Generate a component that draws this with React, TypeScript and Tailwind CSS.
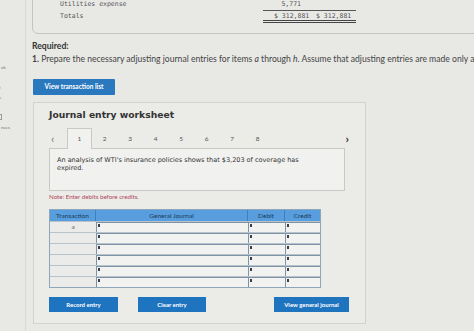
import React from "react";

const tabs = ["2", "3", "4", "5", "6", "7", "8"];
const rows = ["a", "", "", "", "", ""];

function InputCell({ w }: { w: string }) {
  return (
    <div className={`${w} h-full border-l border-t-[1.5px] border-[#7f93a6] bg-[#f2f3f1] flex items-start`}>
      <span className="block w-[1.5px] h-[2.5px] bg-[#34414d] mt-px ml-px" />
    </div>
  );
}

export default function App() {
  return (
    <div className="w-[474px] h-[331px] overflow-hidden bg-[#e8e8e5] flex font-['Lato','Liberation_Sans',sans-serif] text-[#3a3a3a]">
      {/* sidebar fragment */}
      <aside className="w-[26px] shrink-0 border-r border-[#d8d8d4] flex flex-col text-[4.5px] leading-[5px] text-[#777]">
        <div className="mt-[65px] ml-px">ok</div>
        <div className="mt-[15px] ml-[-1px]">t</div>
        <div className="mt-[5px] ml-[-1px]">e</div>
        <div className="mt-[14px] w-[3px] h-[6px] border border-[#999] ml-[-1px]" />
        <div className="mt-[5px] ml-px">nces</div>
      </aside>

      <main className="flex-1 min-w-0 pl-[6px]">
        {/* top trial-balance box */}
        <div className="mt-[-8px] w-[600px] border border-[#c4c4c0] rounded-bl-[6px] pl-[27px] pb-[10px] font-['DejaVu_Sans_Mono',monospace] text-[6.5px] text-[#555] whitespace-nowrap">
          <div className="h-[18px] flex items-end">
            <div className="w-[203px] pb-[3px] leading-[8px]">Utilities expense</div>
            <div className="w-[93px] h-full border-b border-[#555] flex items-end">
              <div className="w-[47px] text-right pr-[9px] leading-[8px] pb-[2px]">5,771</div>
            </div>
          </div>
          <div className="h-[12px] flex items-start">
            <div className="w-[203px] leading-[8px] pt-px">Totals</div>
            <div className="w-[93px] h-full border-b-[3px] border-double border-[#444] flex leading-[8px] pt-px">
              <div className="w-[49px] pl-[11px]">$ 312,881</div>
              <div className="w-[44px] pl-[4px]">$ 312,881</div>
            </div>
          </div>
        </div>

        <div className="mt-[7px] text-[8.6px] leading-[10px] font-bold text-[#333]">Required:</div>
        <div className="mt-[3px] text-[8.6px] leading-[10px] whitespace-nowrap text-[#444]">
          <span className="font-bold">1.</span> Prepare the necessary adjusting journal entries for items <i>a</i> through <i>h</i>. Assume that adjusting entries are made only at year-end.
        </div>

        <button className="mt-[15px] ml-px w-[82px] h-[16px] bg-[#2a78be] text-white text-[6.5px] font-bold rounded-[1px] flex items-center justify-center">
          View transaction list
        </button>

        {/* worksheet panel */}
        <section className="mt-[7px] ml-px w-[333px] h-[222px] border border-[#d2d2ce] bg-[#ebebe8] pl-[15px] pt-[6px]">
          <h2 className="text-[9.2px] leading-[12px] font-bold text-[#333] font-['DejaVu_Sans',sans-serif]">
            Journal entry worksheet
          </h2>

          <div className="mt-[7px] w-[302px] h-[21px] flex items-stretch text-[6.5px] text-[#555]">
            <div className="w-[18px] flex items-center pl-[2px] text-[12px] text-[#777]">&#8249;</div>
            <div className="relative z-10 w-[25px] h-[21px] bg-[#f1f1ef] border border-b-0 border-[#c8c8c4] flex items-center justify-center">
              1
            </div>
            {tabs.map((t) => (
              <div key={t} className="w-[25.5px] flex items-center justify-center">
                {t}
              </div>
            ))}
            <div className="ml-auto flex items-center pr-[2px] text-[12px] text-[#333] font-bold">&#8250;</div>
          </div>

          <div className="mt-[-1px] w-[296px] h-[43px] border border-[#c8c8c4] bg-[#f1f1ef] pl-[7px] pt-[7px] pr-[40px] text-[6.5px] leading-[8px] text-[#333] font-['DejaVu_Sans',sans-serif]">
            An analysis of WTI's insurance policies shows that $3,203 of coverage has expired.
          </div>

          <div className="mt-[3px] text-[6.2px] leading-[6px] text-[#b0465a]">Note: Enter debits before credits.</div>

          {/* table */}
          <div className="mt-[9px] w-[272px] border border-[#8ea6bc] text-[6.5px]">
            <div className="h-[11px] flex bg-[#589ede] text-[#1c3a58]">
              <div className="w-[46px] flex items-center justify-center border-r border-[#3f7fb9]">Transaction</div>
              <div className="w-[152px] flex items-center justify-center border-r border-[#3f7fb9]">General Journal</div>
              <div className="w-[37px] flex items-center justify-center border-r border-[#3f7fb9]">Debit</div>
              <div className="flex-1 flex items-center justify-center">Credit</div>
            </div>
            {rows.map((r, i) => (
              <div key={i} className="h-[11px] flex border-t border-[#b8c2ca]">
                <div className="w-[46px] bg-[#ebebe9] flex items-center justify-center text-[#666]">{r}</div>
                <InputCell w="w-[152px]" />
                <InputCell w="w-[37px]" />
                <InputCell w="flex-1" />
              </div>
            ))}
          </div>

          <div className="mt-[9px] w-[300px] flex text-[6px] font-bold text-white">
            <button className="w-[69px] h-[15px] bg-[#1f74bf] flex items-center justify-center">Record entry</button>
            <button className="ml-[20px] w-[68px] h-[15px] bg-[#1f74bf] flex items-center justify-center">Clear entry</button>
            <button className="ml-auto w-[75px] h-[15px] bg-[#1f74bf] flex items-center justify-center">View general journal</button>
          </div>
        </section>
      </main>
    </div>
  );
}
